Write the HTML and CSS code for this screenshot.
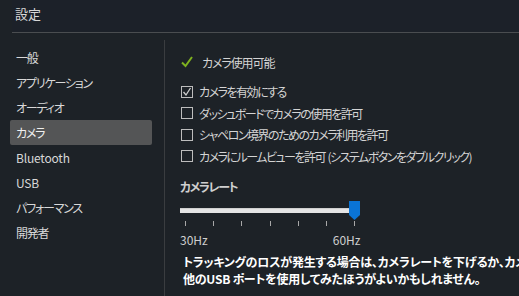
FILE: index.html
```html
<!DOCTYPE html>
<html>
<head>
    <meta charset="utf-8">
    <title>設定</title>
    <link rel="stylesheet" href="styles.css">
</head>
<body>
<div class="header">
    <span class="title">設定</span>
</div>
<div class="main">
    <div class="sidebar">
        <div class="nav_item">一般</div>
        <div class="nav_item">アプリケーション</div>
        <div class="nav_item">オーディオ</div>
        <div class="nav_item active">カメラ</div>
        <div class="nav_item latin">Bluetooth</div>
        <div class="nav_item latin">USB</div>
        <div class="nav_item">パフォーマンス</div>
        <div class="nav_item">開発者</div>
    </div>
    <div class="content">
        <div class="status">
            <svg class="check_mark" width="12" height="12" viewBox="0 0 12 12">
                <path d="M1 6.5 L4.5 10 L11 1" fill="none" stroke="#7fb21f" stroke-width="2"/>
            </svg>
            <span>カメラ使用可能</span>
        </div>
        <div class="options">
            <label class="option"><span class="box checked">
                <svg width="10" height="10" viewBox="0 0 10 10"><path d="M1.5 5 L4 8 L8.5 1" fill="none" stroke="#cfcfcf" stroke-width="1.3"/></svg>
            </span>カメラを有効にする</label>
            <label class="option"><span class="box"></span>ダッシュボードでカメラの使用を許可</label>
            <label class="option"><span class="box"></span>シャペロン境界のためのカメラ利用を許可</label>
            <label class="option"><span class="box"></span>カメラにルームビューを許可&nbsp; (システムボタンをダブルクリック)</label>
        </div>
        <div class="rate_title">カメラレート</div>
        <div class="slider">
            <div class="track"></div>
            <svg class="thumb" width="11" height="19" viewBox="0 0 11 19">
                <path d="M0 0 H11 V14 L5.5 19 L0 14 Z" fill="#0a74d6"/>
            </svg>
        </div>
        <div class="ticks">
            <span></span><span></span><span></span><span></span><span></span><span></span><span></span>
        </div>
        <div class="labels">
            <span>30Hz</span>
            <span>60Hz</span>
        </div>
        <p class="note">トラッキングのロスが発生する場合は、カメラレートを下げるか、カメラを<br>他のUSB ポートを使用してみたほうがよいかもしれません。</p>
    </div>
</div>
</body>
</html>
```

FILE: styles.css
```css
html, body {
    margin: 0;
    height: 296px;
    overflow: hidden;
}

body {
    background-color: #1d2227;
    color: #d4d4d4;
    font-family: "Noto Sans CJK JP", "Noto Sans", sans-serif;
    font-size: 12px;
    font-feature-settings: "palt";
}

.header {
    height: 32px;
    margin-left: 12px;
    border-bottom: 1px solid #4a4d50;
    background-color: #1c2129;
}

.title {
    display: block;
    padding: 6px 0 0 3px;
    font-size: 13px;
    line-height: 16px;
    color: #d8d8d8;
}

.main {
    display: flex;
    margin-top: 7px;
}

.sidebar {
    flex-shrink: 0;
    width: 165px;
    height: 260px;
    padding-top: 5px;
    box-sizing: border-box;
    border-right: 1px solid #3a3d40;
}

.nav_item {
    height: 25px;
    line-height: 25px;
    margin: 0 12px 0 10px;
    padding-left: 6px;
    border-radius: 2px;
    color: #d8d8d8;
    letter-spacing: -1.2px;
    white-space: nowrap;
}

.nav_item.latin {
    letter-spacing: -0.2px;
}

.nav_item.active {
    background-color: #545556;
    color: #f0f0f0;
}

.content {
    flex: 1;
    min-width: 0;
    padding-left: 15px;
    white-space: nowrap;
    overflow: hidden;
}

.status {
    display: flex;
    align-items: center;
    height: 22px;
    margin-top: 11px;
    letter-spacing: -1.1px;
}

.check_mark {
    margin: 0 9px 0 1px;
}

.options {
    margin-top: 8px;
    letter-spacing: -1.5px;
}

.option {
    display: flex;
    align-items: center;
    height: 21.5px;
}

.box {
    display: inline-flex;
    flex-shrink: 0;
    align-items: center;
    justify-content: center;
    width: 10px;
    height: 10px;
    margin: 0 6px 0 1px;
    border: 1px solid #bdbdbd;
}

.rate_title {
    margin-top: 11px;
    font-weight: bold;
    color: #cfcfcf;
    line-height: 18px;
    letter-spacing: -1.4px;
}

.slider {
    position: relative;
    width: 180px;
    height: 19px;
    margin-top: 5px;
}

.track {
    position: absolute;
    left: 0;
    top: 7px;
    width: 172px;
    height: 4px;
    background-color: #e4e4e4;
    border-top: 1px solid #cfcfcf;
}

.thumb {
    position: absolute;
    left: 169px;
    top: 0;
}

.ticks {
    display: flex;
    gap: 27.2px;
    height: 5px;
    margin-top: 1px;
    margin-left: 5px;
}

.ticks span {
    flex-shrink: 0;
    width: 1px;
    height: 5px;
    background-color: #a8a8a8;
}

.labels {
    display: flex;
    width: 180px;
    margin-top: 7px;
    line-height: 14px;
    color: #cfcfcf;
}

.labels span:last-child {
    margin-left: 125px;
}

.note {
    margin: 6px 0 0 3px;
    font-weight: bold;
    color: #ffffff;
    line-height: 17px;
    letter-spacing: -0.25px;
}
```
